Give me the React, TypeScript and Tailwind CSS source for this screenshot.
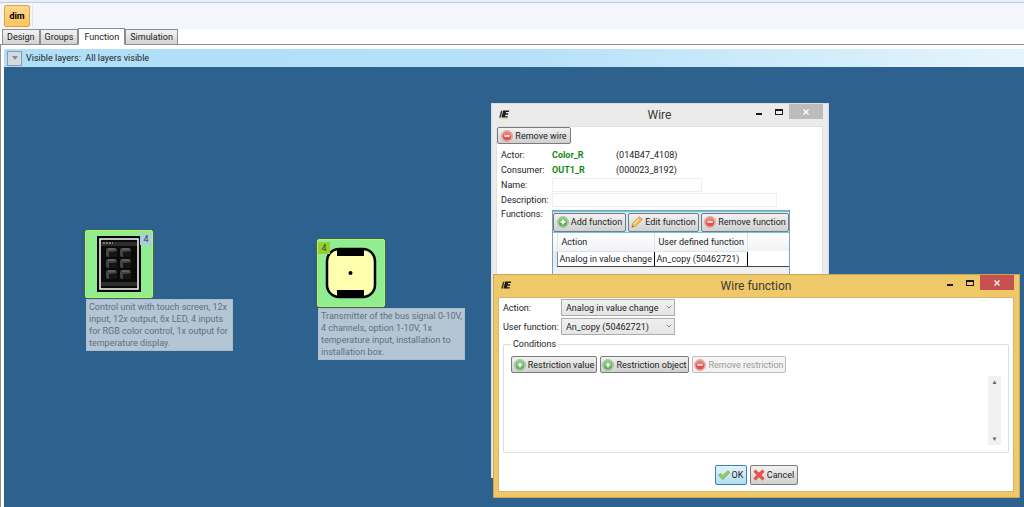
import React from "react";
import { ChevronDown } from "lucide-react";
import clsx from "clsx";

type IconName = "add" | "remove" | "edit" | "ok" | "cancel";

const Icon = ({ name }: { name: IconName }) => {
  if (name === "edit") {
    return (
      <svg viewBox="0 0 12 12" className="size-3 shrink-0">
        <path d="M.8 11.200l1-4L8.500.6l3 2.800L4.800 10z" fill="#f3c04f" stroke="#c08a35" strokeWidth=".6" />
        <path d="M8.500.6l3 2.800-1.300 1.300-3-2.800z" fill="#eda48c" />
        <path d="M.8 11.200l.5-1.700 1.300 1.200z" fill="#555" />
        <path d="M3 8l5-5" stroke="#fff0b8" strokeWidth="1" />
      </svg>
    );
  }
  if (name === "ok") {
    return (
      <svg viewBox="0 0 12 12" className="size-3 shrink-0">
        <path d="M.5 6.200l2.200-1.700 2 2.200L9.900 1.800l1.800 1.600-6.700 7.200z" fill="#93d05c" stroke="#5f9f45" strokeWidth=".7" />
      </svg>
    );
  }
  if (name === "cancel") {
    return (
      <svg viewBox="0 0 12 12" className="size-3 shrink-0">
        <path
          d="M2.600.8L6 4 9.400.8l1.900 1.900L8.100 6l3.200 3.300-1.900 1.900L6 8l-3.400 3.200L.7 9.300 3.900 6 .7 2.700z"
          fill="#f0554c"
          stroke="#c9403a"
          strokeWidth=".5"
        />
      </svg>
    );
  }
  const add = name === "add";
  return (
    <svg viewBox="0 0 12 12" className="size-3 shrink-0">
      <circle cx="6" cy="6" r="5.500" fill={add ? "#c3dcbf" : "#eec3c0"} stroke={add ? "#8aa886" : "#c88"} strokeWidth=".6" />
      <circle cx="6" cy="6" r="4.500" fill={add ? "#5cb151" : "#e4524a"} />
      <path d="M2 5.400a4 4 0 0 1 8 0z" fill="#fff" opacity=".25" />
      <path d={add ? "M3.500 6h5M6 3.500v5" : "M3.300 6h5.400"} stroke="#fff" strokeWidth="1.500" />
    </svg>
  );
};

type ButtonProps = {
  icon: IconName;
  label: string;
  disabled?: boolean;
  primary?: boolean;
  className?: string;
};

const Button = ({ icon, label, disabled, primary, className }: ButtonProps) => (
  <button
    type="button"
    disabled={disabled}
    className={clsx(
      "flex items-center justify-center gap-0.5 rounded-xs border bg-linear-to-b whitespace-nowrap",
      disabled && "border-[#b9bcc0] from-[#f6f6f6] to-[#f1f1f1] text-[#9a9a9a]",
      primary && "border-[#3c7fb1] from-[#e3f3fc] to-[#b2dcf2]",
      !disabled && !primary && "border-[#7b7b7b] from-[#f2f2f2] to-[#d0d0d0]",
      className
    )}
  >
    <Icon name={icon} />
    {label}
  </button>
);

const Logo = ({ active }: { active?: boolean }) => (
  <svg viewBox="0 0 12 12" className="size-3">
    <path
      d="M5.200 2.500h6L10.900 4H8l-.3 1.300h2.700L10 6.700H7.400L7.100 8.200h2.900L9.600 9.600H3.500z"
      fill="#1d1d18"
    />
    <path d="M3 2.800h1.500L2.900 9.600H1.200L1.600 8z" fill="#3a3a33" />
    {!active && <path d="M1.500 10.800h9" stroke="#dcd67a" strokeWidth=".8" />}
  </svg>
);

type WindowProps = {
  title: string;
  active?: boolean;
  className: string;
  children: React.ReactNode;
};

const Window = ({ title, active, className, children }: WindowProps) => (
  <section
    className={clsx(
      "absolute flex flex-col border pr-[5px] pb-[5px] pl-1",
      active ? "border-[#c9a555] bg-[#efc869]" : "border-[#d6dbe0] bg-[#ebebeb]",
      className
    )}
  >
    <header className="relative flex h-[22px] items-center justify-center">
      <span className="absolute top-1 left-0.5">
        <Logo active={active} />
      </span>
      <h2 className="text-xs text-[#3c3a35]">{title}</h2>
      <div className="absolute top-0 right-0 flex h-[15px]">
        <button type="button" aria-label="Minimize" className="flex w-5 items-center justify-center pt-1">
          <span className="h-0.5 w-1.5 bg-[#1a1a1a]" />
        </button>
        <button type="button" aria-label="Maximize" className="flex w-5 items-center justify-center">
          <span className="h-1.5 w-2 border border-t-2 border-[#1a1a1a]" />
        </button>
        <button
          type="button"
          aria-label="Close"
          className={clsx("flex w-[34px] items-center justify-center", active ? "bg-[#c75050]" : "bg-[#bcbcbc]")}
        >
          <svg viewBox="0 0 6 6" className="size-1.5">
            <path d="M.5.5l5 5M5.500.5l-5 5" stroke="#fff" strokeWidth="1.300" />
          </svg>
        </button>
      </div>
    </header>
    <div className={clsx("flex-1 border bg-white", active ? "border-[#d9b765]" : "border-[#e0e0e0]")}>{children}</div>
  </section>
);

const tabs = ["Design", "Groups", "Function", "Simulation"];

const Tabs = () => (
  <nav className="flex h-4 items-end border-b border-[#8c8e94] pl-0.5">
    {tabs.map((tab) => (
      <button
        key={tab}
        type="button"
        className={clsx(
          "-mb-px border border-[#8c8e94]",
          tab === "Function"
            ? "h-[17px] border-b-white bg-white px-[5px]"
            : "h-4 bg-linear-to-b from-[#f3f3f3] to-[#d2d2d2] px-1"
        )}
      >
        {tab}
      </button>
    ))}
  </nav>
);

const touchButtons = [
  [9, 12],
  [23, 12],
  [9, 23],
  [23, 23],
  [9, 34],
  [23, 34],
];

const ControlUnit = () => (
  <svg viewBox="0 0 44 56" className="h-14 w-11">
    <path d="M0 0h44v56H0z" fill="#050505" />
    <path d="M3 3h38v50H3z" fill="#0a0a0a" stroke="#fff" strokeWidth="1.500" />
    <path d="M4 6h36v4H4zM4 46h36v4H4z" fill="#2d2d2d" />
    <path d="M6 7h10" stroke="#e9c9a0" strokeWidth="1" strokeDasharray="2 1" />
    {touchButtons.map(([x, y]) => (
      <g key={`${x}-${y}`} transform={`translate(${x} ${y})`}>
        <rect width="11" height="9" rx="2" fill="#444" />
        <path d="M3 4q5 0 8-1v6H3z" fill="#151515" />
        <path d="M2 1h7" stroke="#888" strokeWidth=".8" />
      </g>
    ))}
  </svg>
);

const Transmitter = () => (
  <svg viewBox="0 0 52 52" className="size-[52px]">
    <rect x="2" y="2" width="48" height="48" rx="12" fill="#ffffb0" stroke="#000" strokeWidth="2.500" />
    <path d="M12 1h27v8H12zM12 43h27v8H12z" fill="#000" />
    <circle cx="25.500" cy="26" r="2" fill="#000" />
  </svg>
);

type DeviceProps = {
  badgeClass: string;
  className: string;
  text: string;
  children: React.ReactNode;
};

const Device = ({ badgeClass, className, text, children }: DeviceProps) => (
  <figure className={clsx("absolute w-[148px]", className)}>
    <div className="relative flex size-[68px] items-center justify-center rounded-xs border border-[#c8f03c] bg-[#90ee90]">
      {children}
      <span className={clsx("absolute top-0.5 flex h-3 w-3 items-center justify-center text-[#2d4a3c]", badgeClass)}>4</span>
    </div>
    <figcaption className="mt-px ml-px border border-[#a9bdcd] bg-[#b4c6d4] py-px pl-0.5 leading-3 text-[#5f707d]">
      {text}
    </figcaption>
  </figure>
);

const WireWindow = () => (
  <Window title="Wire" className="top-9 left-[487px] min-h-[375px] w-[338px]">
    <Button icon="remove" label="Remove wire" className="h-[17px] w-[74px]" />
    <div className="grid grid-cols-[51px_64px_1fr] px-1 pt-1 leading-[15px]">
      <span>Actor:</span>
      <b className="text-[#138a13]">Color_R</b>
      <span>(014B47_4108)</span>
      <span>Consumer:</span>
      <b className="text-[#138a13]">OUT1_R</b>
      <span>(000023_8192)</span>
      <label htmlFor="name">Name:</label>
      <input id="name" className="col-span-2 h-3.5 w-[150px] border border-[#eeeeee] px-1" />
      <label htmlFor="description">Description:</label>
      <input id="description" className="col-span-2 h-3.5 w-[225px] border border-[#eeeeee] px-1" />
      <span className="leading-3">Functions:</span>
      <div className="col-span-2 mt-0.5 min-h-[240px] w-[238px] border border-[#7f9fc0] bg-[#f0f0f0]">
        <div className="flex h-[22px] items-center gap-0.5 border-y border-[#6cc3e6] bg-[#cdebf7]">
          <Button icon="add" label="Add function" className="h-[19px] w-[73px]" />
          <Button icon="edit" label="Edit function" className="h-[19px] w-[71px]" />
          <Button icon="remove" label="Remove function" className="h-[19px] flex-1" />
        </div>
        <table className="w-full table-fixed border-collapse text-left leading-3 whitespace-nowrap">
          <thead className="bg-linear-to-b from-white to-[#f1f2f4]">
            <tr className="h-[18px]">
              <th className="w-1 border-r border-[#dfe3e8]" />
              <th className="w-[97px] border-r border-[#dfe3e8] pl-1 font-normal">Action</th>
              <th className="w-[93px] border-r border-[#dfe3e8] pl-1 font-normal">User defined function</th>
              <th />
            </tr>
          </thead>
          <tbody className="bg-white">
            <tr className="h-[15px]">
              <td className="bg-[#dcecf8]" />
              <td className="border border-t-[#dfe3e8] border-r-black border-b-[#444] border-l-[#8a8a8a] pl-0.5">Analog in value change</td>
              <td className="border border-t-[#dfe3e8] border-r-black border-b-[#444] border-l-black pl-0.5">An_copy (50462721)</td>
              <td className="border-b border-[#444]" />
            </tr>
          </tbody>
        </table>
      </div>
    </div>
  </Window>
);

type SelectProps = {
  id: string;
  label: string;
  value: string;
};

const Select = ({ id, label, value }: SelectProps) => (
  <div className="flex h-[19px] items-center">
    <label htmlFor={id} className="w-[58px] whitespace-nowrap">
      {label}
    </label>
    <div className="relative">
      <select
        id={id}
        className="block h-[17px] w-[114px] appearance-none border border-[#acacac] bg-linear-to-b from-[#f0f0f0] to-[#e5e5e5] pl-1"
      >
        <option>{value}</option>
      </select>
      <ChevronDown className="pointer-events-none absolute top-1 right-0.5 size-2 text-[#555]" />
    </div>
  </div>
);

const WireFunctionWindow = () => (
  <Window title="Wire function" active className="top-[207px] left-[489px] w-[527px]">
    <div className="px-1">
      <Select id="action" label="Action:" value="Analog in value change" />
      <Select id="user-function" label="User function:" value="An_copy (50462721)" />
      <fieldset className="mt-0.5 h-[115px] rounded-xs border border-[#d5dfe5] px-[7px]">
        <legend className="px-0.5 leading-3">Conditions</legend>
        <div className="mt-1.5 flex gap-[3px]">
          <Button icon="add" label="Restriction value" className="h-[17px] w-[86px]" />
          <Button icon="add" label="Restriction object" className="h-[17px] w-[89px]" />
          <Button icon="remove" label="Remove restriction" disabled className="h-[17px] w-[94px]" />
        </div>
        <div className="mt-[3px] flex h-[69px] justify-end">
          <div className="flex w-[13px] flex-col items-center justify-between bg-[#f1f1f1] text-[6px] leading-3 text-[#606060]">
            <span>▲</span>
            <span>▼</span>
          </div>
        </div>
      </fieldset>
    </div>
    <div className="flex justify-center gap-[3px] pt-3 pb-1.5">
      <Button icon="ok" label="OK" primary className="h-5 w-8" />
      <Button icon="cancel" label="Cancel" className="h-5 w-12" />
    </div>
  </Window>
);

const App = () => {
  return (
    <div className="flex min-h-screen flex-col bg-white font-[Roboto,'Open_Sans',sans-serif] text-[9px] leading-3 text-[#222]">
      <div className="h-[3px] border-b border-[#b9cde3] bg-[#e6eff9]" />
      <div className="flex h-[26px] items-center bg-[#f4f6fb] pl-0.5">
        <div className="border-r border-[#dfe3ea] px-0.5">
          <button
            type="button"
            className="h-[22px] w-[26px] rounded-xs border border-[#d9a548] bg-linear-to-b from-[#fdd78c] to-[#fdc65c] font-bold text-black"
          >
            dim
          </button>
        </div>
      </div>
      <Tabs />
      <main className="flex flex-1 flex-col border-l border-[#8c8e94] pt-1 pl-[3px]">
        <div className="flex h-[18px] items-center gap-1 bg-linear-to-r from-[#b0dff8] via-[#b5e0f8] to-[#e6f5fd] pl-[3px]">
          <button
            type="button"
            aria-label="Show layers"
            className="flex size-[15px] items-center justify-center border border-[#8c9aa5] bg-[#d3dce2] text-[#8a8a8a]"
          >
            <svg viewBox="0 0 6 4" className="h-1 w-1.5">
              <path d="M0 0h6L3 4z" fill="currentColor" />
            </svg>
          </button>
          <span>Visible layers:&nbsp; All layers visible</span>
        </div>
        <div className="relative flex-1 overflow-hidden bg-[#2c628d]">
          <Device
            badgeClass="right-0 bg-[#a9cfdc]"
            className="top-[163px] left-[81px]"
            text="Control unit with touch screen, 12x input, 12x output, 6x LED, 4 inputs for RGB color control, 1x output for temperature display."
          >
            <ControlUnit />
          </Device>
          <Device
            badgeClass="left-0 bg-[#9acd32]"
            className="top-[172px] left-[313px]"
            text="Transmitter of the bus signal 0-10V, 4 channels, option 1-10V, 1x temperature input, installation to installation box."
          >
            <Transmitter />
          </Device>
          <WireWindow />
          <WireFunctionWindow />
        </div>
      </main>
    </div>
  );
};

export default App;
